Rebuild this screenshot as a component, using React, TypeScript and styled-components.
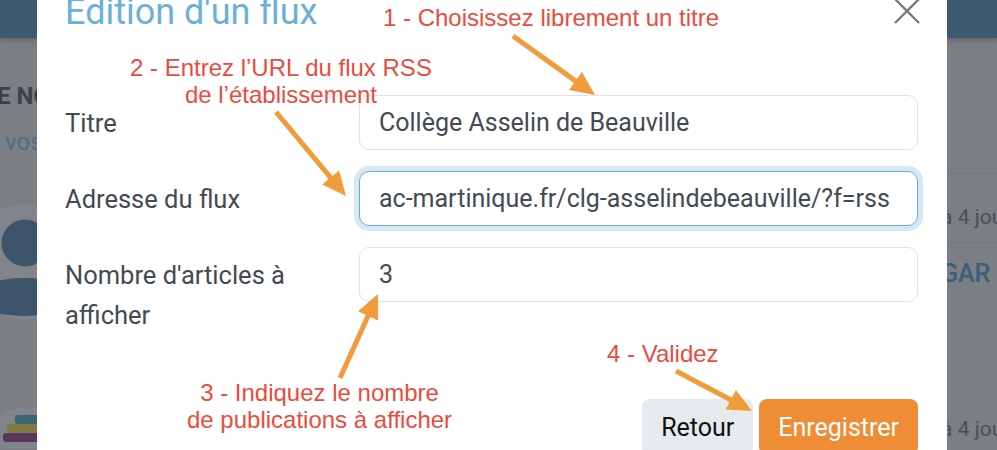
import styled, { createGlobalStyle } from 'styled-components';

const GlobalStyle = createGlobalStyle`
  html, body {
    margin: 0;
    padding: 0;
  }
  body {
    font-family: Roboto, "Liberation Sans", sans-serif;
    background: #fff;
  }
`;

type Point = [number, number];

const arrows: { from: Point; to: Point }[] = [
  { from: [513, 36], to: [595, 95] },
  { from: [276, 112], to: [346, 196] },
  { from: [340, 378], to: [378, 294] },
  { from: [676, 371], to: [752, 411] },
];

const Arrow = ({ from, to }: { from: Point; to: Point }) => {
  const dx = to[0] - from[0];
  const dy = to[1] - from[1];
  const len = Math.hypot(dx, dy);
  const ux = dx / len;
  const uy = dy / len;
  const head = 24;
  const half = 11;
  const bx = to[0] - ux * head;
  const by = to[1] - uy * head;
  const pts = [
    `${to[0]},${to[1]}`,
    `${bx - uy * half},${by + ux * half}`,
    `${bx + uy * half},${by - ux * half}`,
  ].join(' ');
  return (
    <g>
      <line x1={from[0]} y1={from[1]} x2={bx + ux * 2} y2={by + uy * 2} stroke="#f19b3a" strokeWidth={5} />
      <polygon points={pts} fill="#f19b3a" />
    </g>
  );
};

const App = () => {
  return (
    <>
      <GlobalStyle />
      <Screen>
        <Page>
          <TopBar />
          <PageBody>
            <LeftColumn>
              <Heading>E NOS ACTUALITÉS</Heading>
              <Lead>vos actualités</Lead>
              <svg width="120" height="130" viewBox="0 0 120 130" style={{ marginLeft: -32, marginTop: 48 }}>
                <circle cx="60" cy="58" r="58" fill="#dadde2" />
                <circle cx="60" cy="39" r="23.5" fill="#5f86a8" />
                <ellipse cx="60" cy="93" rx="52" ry="19" fill="#5f86a8" />
              </svg>
              <svg width="80" height="50" viewBox="0 0 80 50" style={{ marginLeft: -10, marginTop: 65 }}>
                <circle cx="40" cy="58" r="50" fill="#dadde2" />
                <rect x="28" y="16" width="40" height="9" rx="3" fill="#5aa3b4" />
                <rect x="20" y="25" width="46" height="9" rx="3" fill="#d6cb5d" />
                <rect x="16" y="34" width="50" height="9" rx="3" fill="#934f92" />
              </svg>
            </LeftColumn>
            <RightColumn>
              <NewsItem $height={69}>
                <NewsDate>à 4 jours</NewsDate>
              </NewsItem>
              <NewsItem $height={212}>
                <NewsTitle>GAR</NewsTitle>
                <NewsDate>à 4 jours</NewsDate>
              </NewsItem>
            </RightColumn>
          </PageBody>
        </Page>
        <Backdrop />

        <Modal>
          <ModalHeader>
            <ModalTitle>Edition d'un flux</ModalTitle>
            <CloseButton aria-label="Fermer">
              <svg width="26" height="26" viewBox="0 0 26 26">
                <path d="M1 1 L25 25 M25 1 L1 25" stroke="#7a7a7a" strokeWidth="2.4" fill="none" />
              </svg>
            </CloseButton>
          </ModalHeader>
          <Form>
            <Label>Titre</Label>
            <Input defaultValue="Collège Asselin de Beauville" />
            <Label>Adresse du flux</Label>
            <Input $focused defaultValue="ac-martinique.fr/clg-asselindebeauville/?f=rss" />
            <Label>
              Nombre d'articles à
              <br />
              afficher
            </Label>
            <Input defaultValue="3" />
          </Form>
          <Footer>
            <Button>Retour</Button>
            <Button $primary>Enregistrer</Button>
          </Footer>
        </Modal>

        <Arrows width="997" height="450" viewBox="0 0 997 450">
          {arrows.map((a, i) => (
            <Arrow key={i} from={a.from} to={a.to} />
          ))}
        </Arrows>
        <Note $x={383} $y={4}>1 - Choisissez librement un titre</Note>
        <Note $x={130} $y={54}>
          2 - Entrez l’URL du flux RSS
          <br />
          de l’établissement
        </Note>
        <Note $x={187} $y={379}>
          3 - Indiquez le nombre
          <br />
          de publications à afficher
        </Note>
        <Note $x={607} $y={340}>4 - Validez</Note>
      </Screen>
    </>
  );
};

export default App;

const Screen = styled.div`
  position: relative;
  width: 997px;
  height: 450px;
  overflow: hidden;
`;

const Page = styled.div`
  display: flex;
  flex-direction: column;
  height: 100%;
  background: #cfd1d6;
`;

const TopBar = styled.header`
  flex-shrink: 0;
  height: 38px;
  background: #608eb1;
  box-shadow: 0 2px 5px rgba(0, 0, 0, 0.25);
`;

const PageBody = styled.div`
  display: flex;
  justify-content: space-between;
  flex: 1;
  min-height: 0;
`;

const LeftColumn = styled.div`
  display: flex;
  flex-direction: column;
  width: 300px;
  margin-left: -3px;
  padding-top: 44px;
`;

const Heading = styled.div`
  font-size: 24px;
  line-height: 28px;
  font-weight: 700;
  color: #5c636d;
  white-space: nowrap;
`;

const Lead = styled.div`
  margin-top: 18px;
  padding-left: 8px;
  font-size: 24px;
  line-height: 28px;
  color: #7db5e0;
  white-space: nowrap;
`;

const RightColumn = styled.div`
  width: 56px;
  overflow: hidden;
  padding-top: 135px;
`;

const NewsItem = styled.div<{ $height: number }>`
  display: flex;
  flex-direction: column;
  justify-content: space-between;
  height: ${(p) => p.$height}px;
  border-top: 1px solid #c4c7cc;
  box-sizing: border-box;
  padding-bottom: 12px;
  white-space: nowrap;

  & > :only-child {
    margin-top: auto;
  }
`;

const NewsDate = styled.div`
  font-size: 21px;
  line-height: 26px;
  color: #7a7d83;
`;

const NewsTitle = styled.div`
  margin-top: 17px;
  font-size: 25px;
  line-height: 28px;
  font-weight: 500;
  color: #5c98c6;
`;

const Backdrop = styled.div`
  position: absolute;
  inset: 0;
  background: rgba(20, 24, 32, 0.45);
`;

const Modal = styled.div`
  position: absolute;
  left: 37px;
  top: -12px;
  width: 910px;
  height: 480px;
  box-sizing: border-box;
  padding: 0 29px 0 28px;
  background: #fff;
`;

const ModalHeader = styled.div`
  display: flex;
  justify-content: space-between;
  align-items: flex-start;
  height: 107px;
`;

const ModalTitle = styled.h2`
  margin: 4px 0 0;
  font-size: 36px;
  line-height: 40px;
  font-weight: 400;
  color: #6cb0d9;
`;

const CloseButton = styled.button`
  margin: 10px -2px 0 0;
  padding: 0;
  border: 0;
  background: none;
  line-height: 0;
`;

const Form = styled.div`
  display: grid;
  grid-template-columns: 294px 1fr;
  row-gap: 21px;
`;

const Label = styled.label`
  padding-top: 8px;
  font-size: 25.5px;
  line-height: 40px;
  color: #434a54;
`;

const Input = styled.input<{ $focused?: boolean }>`
  height: 55px;
  box-sizing: border-box;
  padding: 0 16px 0 19px;
  border: 1px solid ${(p) => (p.$focused ? '#6aaed6' : '#e1e2e6')};
  border-radius: 10px;
  box-shadow: ${(p) => (p.$focused ? '0 0 0 5px #d6e8f4' : 'none')};
  font-family: Roboto, "Liberation Sans", sans-serif;
  font-size: 25px;
  color: #434a54;
  outline: none;
`;

const Footer = styled.div`
  display: flex;
  justify-content: flex-end;
  gap: 6px;
  margin-top: 64px;
`;

const Button = styled.button<{ $primary?: boolean }>`
  height: 56px;
  padding: 0 19px;
  border: 0;
  border-radius: 8px;
  background: ${(p) => (p.$primary ? '#ee8d35' : '#e7eaed')};
  color: ${(p) => (p.$primary ? '#fff' : '#111')};
  font-family: Roboto, "Liberation Sans", sans-serif;
  font-size: 25px;
`;

const Arrows = styled.svg`
  position: absolute;
  left: 0;
  top: 0;
  pointer-events: none;
`;

const Note = styled.div<{ $x: number; $y: number }>`
  position: absolute;
  left: ${(p) => p.$x}px;
  top: ${(p) => p.$y}px;
  width: max-content;
  font-family: "Liberation Sans", Arial, sans-serif;
  font-size: 24px;
  line-height: 27px;
  text-align: center;
  color: #ea4b3c;
`;
